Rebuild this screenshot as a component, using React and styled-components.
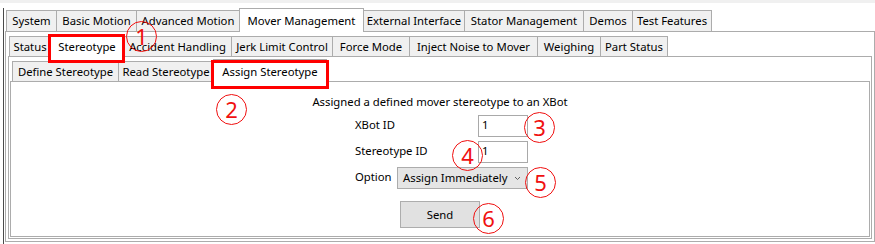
import React from "react";
import styled, { createGlobalStyle } from "styled-components";

const Global = createGlobalStyle`
  html, body { margin: 0; padding: 0; background: #ffffff; }
  body { font-family: "Noto Sans", "Open Sans", sans-serif; }
`;

const Root = styled.div`
  position: relative;
  width: 875px;
  height: 244px;
  box-sizing: border-box;
  background: #ffffff;
  border-top: 3px solid #f0f0f0;
  padding: 5px 0 0 3px;
  overflow: hidden;
  font-family: "Noto Sans", "Open Sans", sans-serif;
  font-size: 11.3px;
  color: #000;
`;

const Frame = styled.div`
  border-left: 1px solid #4a4a4a;
  padding-left: 1px;
  height: 100%;
  box-sizing: border-box;
`;

const TabControl = styled.div`
  display: flex;
  flex-direction: column;
`;

const TabRow = styled.div`
  display: flex;
  align-items: flex-end;
  height: ${(p) => p.$h}px;
  padding-left: ${(p) => p.$indent}px;
  position: relative;
  z-index: 2;
`;

const Tab = styled.div`
  box-sizing: border-box;
  width: ${(p) => p.$w}px;
  height: ${(p) => (p.$active ? p.$h + 3 : p.$h)}px;
  margin-left: ${(p) => (p.$first ? 0 : -1)}px;
  margin-bottom: ${(p) => (p.$active ? -1 : 0)}px;
  padding-top: ${(p) => (p.$active ? 2 : 0)}px;
  padding-bottom: ${(p) => (p.$active ? 1 : 0)}px;
  border: 1px solid #acacac;
  border-bottom: none;
  background: ${(p) => (p.$active ? "#ffffff" : "#f0f0f0")};
  display: flex;
  align-items: center;
  justify-content: center;
  white-space: nowrap;
  line-height: 16px;
  position: relative;
  z-index: ${(p) => (p.$active ? 2 : 1)};
`;

const Panel = styled.div`
  box-sizing: border-box;
  height: ${(p) => p.$height}px;
  border: 1px solid #acacac;
  background: #ffffff;
  padding: ${(p) => p.$pad};
  display: flex;
  flex-direction: column;
  position: relative;
  z-index: 1;
`;

const Content = styled.div`
  display: flex;
  flex-direction: column;
  align-items: center;
  padding-top: 12px;
`;

const Title = styled.div`
  line-height: 16px;
  height: 16px;
  white-space: nowrap;
`;

const Form = styled.div`
  align-self: flex-start;
  margin-left: 344px;
  margin-top: 5px;
  width: 173px;
  display: flex;
  flex-direction: column;
  gap: 4px;
`;

const FormRow = styled.div`
  display: flex;
  align-items: center;
  justify-content: space-between;
  height: 22px;
`;

const Label = styled.div`
  line-height: 16px;
  white-space: nowrap;
  margin-top: -2px;
`;

const TextBox = styled.div`
  box-sizing: border-box;
  width: 50px;
  height: 22px;
  border: 1px solid #a9a9a9;
  background: #fff;
  padding: 1px 3px;
  line-height: 16px;
`;

const Select = styled.div`
  box-sizing: border-box;
  width: 131px;
  height: 22px;
  border: 1px solid #acacac;
  background: #e5e5e5;
  padding: 0 6px 0 5px;
  display: flex;
  align-items: center;
  justify-content: space-between;
  line-height: 16px;
  white-space: nowrap;
`;

const Button = styled.div`
  margin-top: 12px;
  box-sizing: border-box;
  width: 80px;
  height: 27px;
  border: 1px solid #adadad;
  background: #e1e1e1;
  display: flex;
  align-items: center;
  justify-content: center;
  line-height: 16px;
`;

const RedBox = styled.div`
  position: absolute;
  box-sizing: border-box;
  left: ${(p) => p.$x}px;
  top: ${(p) => p.$y}px;
  width: ${(p) => p.$w}px;
  height: ${(p) => p.$h}px;
  border: 3px solid #ff0000;
  z-index: 10;
  pointer-events: none;
`;

const Marker = styled.div`
  position: absolute;
  box-sizing: border-box;
  left: ${(p) => p.$x - 15}px;
  top: ${(p) => p.$y - 15}px;
  width: 31px;
  height: 31px;
  border: 1.5px solid #f01010;
  border-radius: 50%;
  color: #f01010;
  font-family: "Noto Sans", sans-serif;
  font-size: 22px;
  line-height: 28px;
  text-align: center;
  z-index: 11;
`;

const row1 = [
  ["System", 51],
  ["Basic Motion", 81],
  ["Advanced Motion", 104],
  ["Mover Management", 125, true],
  ["External Interface", 102],
  ["Stator Management", 120],
  ["Demos", 50],
  ["Test Features", 80],
];

const row2 = [
  ["Status", 42],
  ["Stereotype", 74, true],
  ["Accident Handling", 109],
  ["Jerk Limit Control", 102],
  ["Force Mode", 78],
  ["Inject Noise to Mover", 129],
  ["Weighing", 64],
  ["Part Status", 68],
];

const row3 = [
  ["Define Stereotype", 107],
  ["Read Stereotype", 96],
  ["Assign Stereotype", 114, true],
];

function Tabs({ items, h, indent }) {
  return (
    <TabRow $h={h + 2} $indent={indent}>
      {items.map(([label, w, active], i) => (
        <Tab key={label} $w={w} $h={h} $active={!!active} $first={i === 0}>
          {label}
        </Tab>
      ))}
    </TabRow>
  );
}

function Chevron() {
  return (
    <svg width="7" height="5" viewBox="0 0 7 5">
      <path d="M1 1 L3.5 3.5 L6 1" stroke="#606060" strokeWidth="1" fill="none" />
    </svg>
  );
}

export default function App() {
  return (
    <Root>
      <Global />
      <Frame>
        <TabControl>
          <Tabs items={row1} h={21} indent={1} />
          <Panel $height={211} $pad="2px">
            <Tabs items={row2} h={20} indent={1} />
            <Panel $height={183} $pad="2px 1px 1px 1px">
              <Tabs items={row3} h={20} indent={2} />
              <Panel $height={156} $pad="0">
                <Content>
                  <Title>Assigned a defined mover stereotype to an XBot</Title>
                  <Form>
                    <FormRow>
                      <Label>XBot ID</Label>
                      <TextBox>1</TextBox>
                    </FormRow>
                    <FormRow>
                      <Label>Stereotype ID</Label>
                      <TextBox>1</TextBox>
                    </FormRow>
                    <FormRow>
                      <Label>Option</Label>
                      <Select>
                        <span>Assign Immediately</span>
                        <Chevron />
                      </Select>
                    </FormRow>
                  </Form>
                  <Button>Send</Button>
                </Content>
              </Panel>
            </Panel>
          </Panel>
        </TabControl>
      </Frame>
      <RedBox $x={48} $y={31} $w={77} $h={29} />
      <RedBox $x={211} $y={57} $w={118} $h={29} />
      <Marker $x={141} $y={33}>1</Marker>
      <Marker $x={231} $y={106}>2</Marker>
      <Marker $x={539} $y={124}>3</Marker>
      <Marker $x={467} $y={152}>4</Marker>
      <Marker $x={540} $y={179}>5</Marker>
      <Marker $x={488} $y={215}>6</Marker>
    </Root>
  );
}
